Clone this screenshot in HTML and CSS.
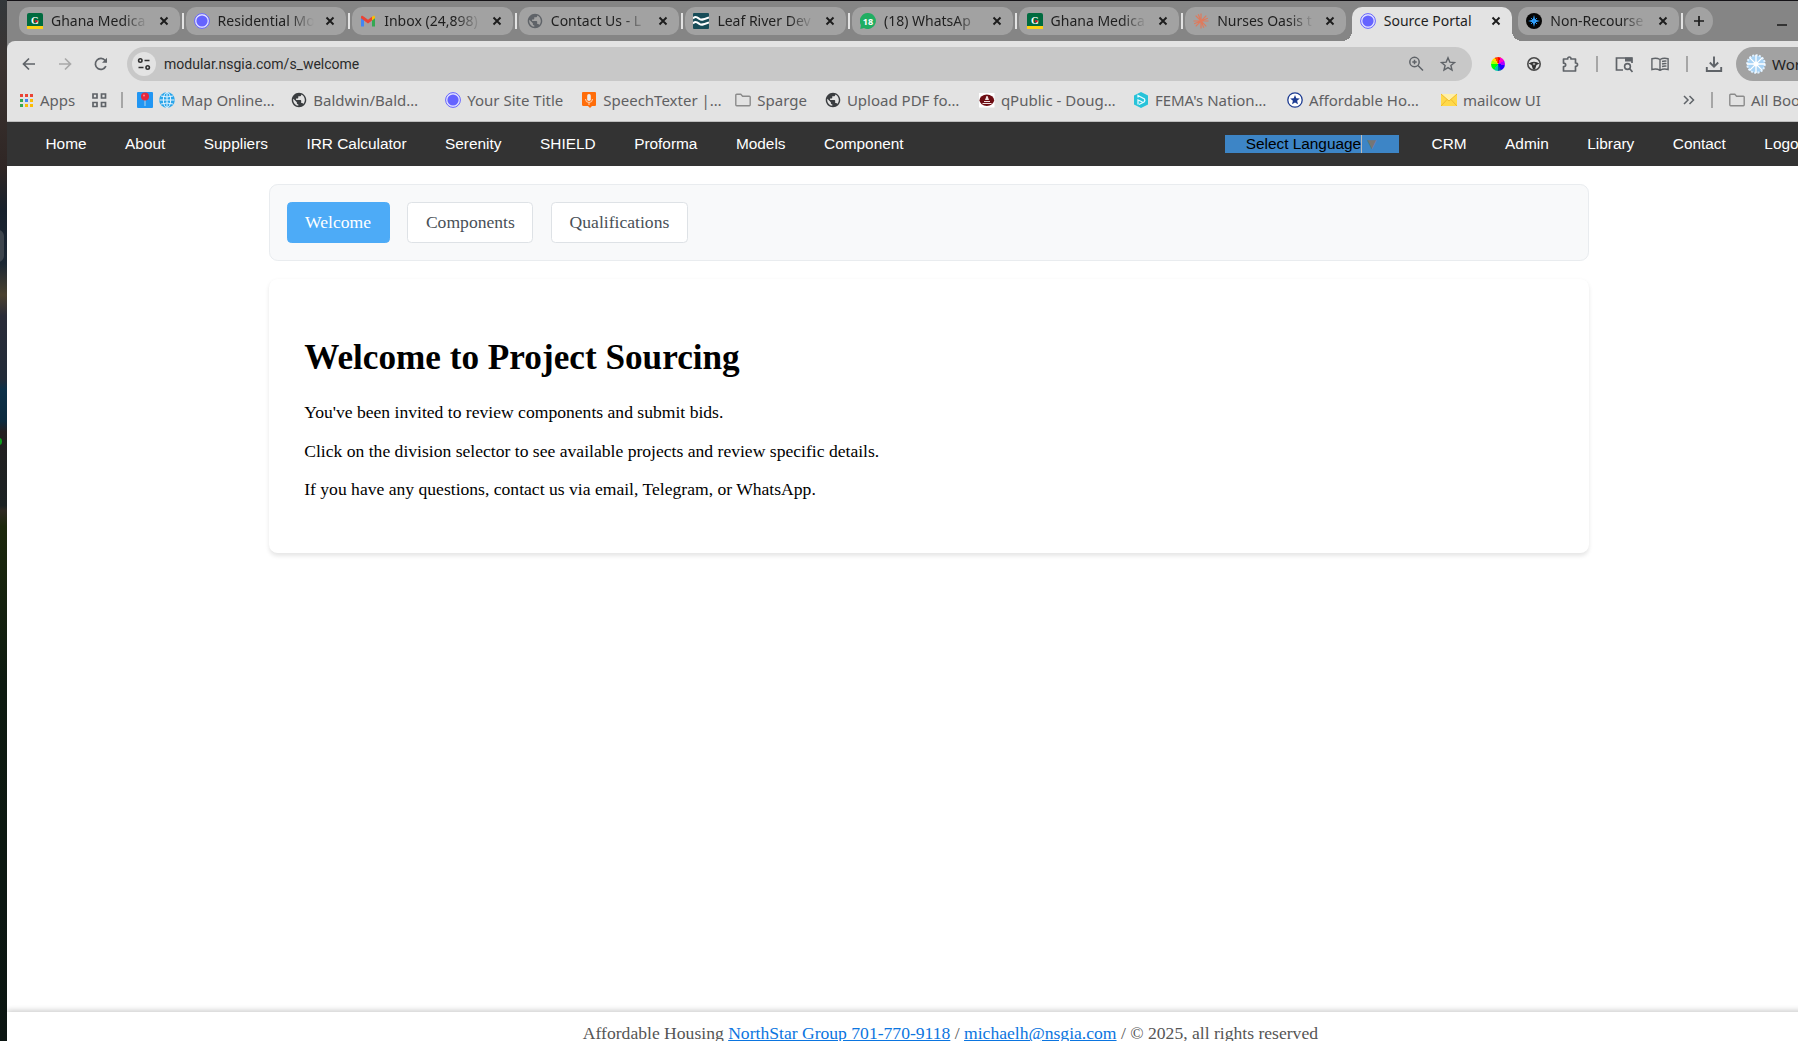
FILE: index.html
```html
<!DOCTYPE html>
<html lang="en">
<head>
<meta charset="utf-8">
<title>Source Portal</title>
<link rel="stylesheet" href="styles.css">
</head>
<body>
<svg class="sprite" aria-hidden="true">
  <symbol id="i-close" viewBox="0 0 16 16"><path d="M4.500 4.500l7 7M11.500 4.500l-7 7" stroke="#1c1c1c" stroke-width="1.900" fill="none"/></symbol>
  <symbol id="i-ghana" viewBox="0 0 16 16"><rect width="16" height="16" rx="2" fill="#006b3f"/><path d="M0 13h16v3H0z" fill="#fcd116"/><text x="8" y="11" text-anchor="middle" class="ghana-letter">G</text><circle cx="9.300" cy="8.300" r="1.300" fill="#ce1126"/></symbol>
  <symbol id="i-disc" viewBox="0 0 16 16"><circle cx="8" cy="8" r="7.400" fill="#e4e4ff" stroke="#6563ff" stroke-width="1"/><circle cx="8" cy="8" r="5.600" fill="#6563ff"/></symbol>
  <symbol id="i-globe" viewBox="1 1 22 22"><path fill="currentColor" d="M12 2C6.480 2 2 6.480 2 12s4.480 10 10 10 10-4.480 10-10S17.520 2 12 2zm-1 17.930c-3.950-.49-7-3.850-7-7.930 0-.62.08-1.210.21-1.790L9 15v1c0 1.100.9 2 2 2v1.930zm6.900-2.540c-.26-.81-1-1.390-1.900-1.390h-1v-3c0-.55-.45-1-1-1H8v-2h2c.55 0 1-.45 1-1V7h2c1.100 0 2-.9 2-2v-.41c2.930 1.190 5 4.060 5 7.410 0 2.080-.8 3.970-2.100 5.390z"/></symbol>
  <symbol id="i-folder" viewBox="0 0 16 16"><path d="M.8 3.200c0-.5.400-.9.900-.9h4.100l1.800 1.900h6.700c.5 0 .9.400.9.900v7.700c0 .5-.4.900-.9.900H1.700c-.5 0-.9-.4-.9-.9z" stroke="#8b8b8b" stroke-width="1.400" fill="none"/></symbol>
</svg>

<div class="desktop">
  <div class="wallpaper"><span class="wallpaper-dock"></span><span class="wallpaper-dot"></span></div>
  <div class="window">
    <header class="strip">
      <div class="tabs">
        <div class="tab sep"><svg class="fav"><use href="#i-ghana"/></svg><button class="tab-title">Ghana Medica</button><button class="tab-close" aria-label="Close tab"><svg><use href="#i-close"/></svg></button></div>
        <div class="tab sep"><svg class="fav"><use href="#i-disc"/></svg><button class="tab-title">Residential Mo</button><button class="tab-close" aria-label="Close tab"><svg><use href="#i-close"/></svg></button></div>
        <div class="tab sep"><svg class="fav" viewBox="0 0 16 16"><path d="M1 4v9.500h3V7z" fill="#4285f4"/><path d="M15 4v9.500h-3V7z" fill="#34a853"/><path d="M12 3.800l1.200-.9C14 2.400 15 3 15 4v1.200l-3 2.300z" fill="#fbbc04"/><path d="M4 3.800L2.800 2.900C2 2.400 1 3 1 4v1.200L4 7.500l4 3 4-3V3.800l-4 3z" fill="#ea4335"/></svg><button class="tab-title">Inbox (24,898)</button><button class="tab-close" aria-label="Close tab"><svg><use href="#i-close"/></svg></button></div>
        <div class="tab sep"><svg class="fav globe-soft"><use href="#i-globe"/></svg><button class="tab-title">Contact Us - L</button><button class="tab-close" aria-label="Close tab"><svg><use href="#i-close"/></svg></button></div>
        <div class="tab sep"><svg class="fav" viewBox="0 0 16 16"><rect width="16" height="16" rx="1" fill="#174c58"/><path d="M0 5.500C2.500 2.500 4.500 4.500 6.500 6S11 6.500 16 4.500M0 10.500C2.500 7.500 4.500 9.500 6.500 11S11 11.500 16 9.500" stroke="#fff" stroke-width="2" fill="none"/></svg><button class="tab-title">Leaf River Dev</button><button class="tab-close" aria-label="Close tab"><svg><use href="#i-close"/></svg></button></div>
        <div class="tab sep"><svg class="fav" viewBox="0 0 16 16"><path d="M8 0a8 8 0 1 1-4 15L.3 16 .9 12A8 8 0 0 1 8 0z" fill="#1fae62"/><text x="8" y="11.500" text-anchor="middle" class="badge-text">18</text></svg><button class="tab-title">(18) WhatsAp</button><button class="tab-close" aria-label="Close tab"><svg><use href="#i-close"/></svg></button></div>
        <div class="tab sep"><svg class="fav"><use href="#i-ghana"/></svg><button class="tab-title">Ghana Medica</button><button class="tab-close" aria-label="Close tab"><svg><use href="#i-close"/></svg></button></div>
        <div class="tab"><svg class="fav" viewBox="0 0 16 16"><path d="M8 .5v15M.5 8h15M2.700 2.700l10.600 10.600M13.300 2.700L2.700 13.300M5.200 1.200l5.600 13.600M14.800 5.200L1.200 10.800" stroke="#e07a5c" stroke-width="1.200"/></svg><button class="tab-title">Nurses Oasis t</button><button class="tab-close" aria-label="Close tab"><svg><use href="#i-close"/></svg></button></div>
        <div class="tab tab-active"><svg class="fav"><use href="#i-disc"/></svg><button class="tab-title">Source Portal</button><button class="tab-close" aria-label="Close tab"><svg><use href="#i-close"/></svg></button></div>
        <div class="tab sep"><svg class="fav" viewBox="0 0 16 16"><circle cx="8" cy="8" r="8" fill="#050505"/><path d="M8 2l1.200 4.800L14 8 9.200 9.200 8 14 6.800 9.200 2 8l4.800-1.200z" fill="#35a4ff"/><path d="M5 5l6 6M11 5l-6 6" stroke="#2490ee" stroke-width="1"/></svg><button class="tab-title">Non-Recourse</button><button class="tab-close" aria-label="Close tab"><svg><use href="#i-close"/></svg></button></div>
      </div>
      <button class="new-tab" aria-label="New tab"><svg viewBox="0 0 16 16"><path d="M8 3v10M3 8h10" stroke="#1c1c1c" stroke-width="1.700"/></svg></button>
      <button class="minimize" aria-label="Minimize"></button>
    </header>

    <div class="toolbar">
      <div class="address-row">
        <div class="history">
          <button class="icon-btn" aria-label="Back"><svg viewBox="0 0 16 16"><path d="M14 8H3M8 2.500L2.500 8 8 13.500" stroke="#5f6368" stroke-width="1.700" fill="none"/></svg></button>
          <button class="icon-btn" aria-label="Forward"><svg viewBox="0 0 16 16"><path d="M2 8h11M8 2.500L13.500 8 8 13.500" stroke="#a9a9a9" stroke-width="1.700" fill="none"/></svg></button>
          <button class="icon-btn" aria-label="Reload"><svg viewBox="0 0 16 16"><path d="M12.900 10.200A5.500 5.500 0 1 1 12.200 4.500L13.500 6" stroke="#5f6368" stroke-width="1.700" fill="none"/><path d="M14 1.800v5H9z" fill="#5f6368"/></svg></button>
        </div>
        <div class="omnibox">
          <button class="site-info" aria-label="Site information"><svg viewBox="0 0 16 16"><g stroke="#303030" stroke-width="1.600" fill="none"><circle cx="4.300" cy="4.500" r="1.700"/><path d="M8.500 4.500h5M2.500 11.500h5"/><circle cx="11.700" cy="11.500" r="1.700"/></g></svg></button>
          <input class="url" type="text" aria-label="Address" value="modular.nsgia.com/s_welcome">
          <button class="icon-btn" aria-label="Zoom"><svg viewBox="0 0 16 16"><g stroke="#5f6368" stroke-width="1.500" fill="none"><circle cx="6.500" cy="6" r="4.700"/><path d="M10 9.500l5 5M6.500 3.800v4.400M4.300 6h4.400"/></g></svg></button>
          <button class="icon-btn" aria-label="Bookmark this page"><svg viewBox="0 0 16 16"><path d="M8 1.800l1.800 4.300 4.700.4-3.600 3 1.100 4.600L8 11.600l-4 2.500 1.100-4.600-3.600-3 4.700-.4z" stroke="#5f6368" stroke-width="1.400" fill="none"/></svg></button>
        </div>
        <div class="extensions">
          <button class="icon-btn" aria-label="Color picker"><span class="wheel"></span></button>
          <button class="icon-btn" aria-label="Steering"><svg viewBox="0 0 16 16"><circle cx="8" cy="8" r="6.200" fill="#e3e3e3" stroke="#4a4a4a" stroke-width="1.600"/><path d="M2.500 7.500q5.500-3.500 11 0l-3 1.500L9 13.500H7L5.500 9z" fill="#333"/><circle cx="8" cy="8" r="1.300" fill="#999"/></svg></button>
          <button class="icon-btn" aria-label="Extensions"><svg class="glyph-18" viewBox="0 0 18 18"><path d="M2.500 4h4.200c-.3-2.700 3.600-2.700 3.300 0h4.500v4c2.700-.3 2.700 3.700 0 3.400V16h-12v-4.300c2.900.2 2.900-3.700 0-3.500z" stroke="#5f6368" stroke-width="1.700" fill="none" stroke-linejoin="round"/></svg></button>
        </div>
        <span class="divider"></span>
        <div class="panel-tools">
          <button class="icon-btn" aria-label="Search this page"><svg class="glyph-18" viewBox="0 0 18 18"><path d="M8 15H1.500V3H17v5" stroke="#5f6368" stroke-width="1.700" fill="none"/><path d="M10 2.500h7v4h-7z" fill="#5f6368"/><circle cx="12.500" cy="11.500" r="2.900" stroke="#5f6368" stroke-width="1.600" fill="none"/><path d="M14.500 13.500L17.500 17" stroke="#5f6368" stroke-width="1.700"/></svg></button>
          <button class="icon-btn" aria-label="Reading mode"><svg class="glyph-18" viewBox="0 0 18 18"><path d="M9 4.500C6.500 3 3.500 3 .9 3.700V14.500c2.600-.7 5.600-.7 8.100.8 2.500-1.500 5.500-1.500 8.100-.8V3.700C14.500 3 11.500 3 9 4.500zV15M11 6.500q2-.7 4.500-.4M11 9q2-.7 4.500-.4M11 11.500q2-.7 4.500-.4" stroke="#5f6368" stroke-width="1.400" fill="none"/></svg></button>
        </div>
        <span class="divider"></span>
        <button class="icon-btn" aria-label="Downloads"><svg class="glyph-18" viewBox="0 0 18 18"><path d="M9 1.500v10M4.800 7.500L9 11.700l4.200-4.200M1.800 12v4h14.400v-4" stroke="#5f6368" stroke-width="1.900" fill="none"/></svg></button>
        <button class="profile"><svg viewBox="0 0 20 20"><circle cx="10" cy="10" r="8.800" fill="#a9d3f5" stroke="#dff0ff" stroke-width="2" stroke-dasharray="2 1.400"/><path d="M10 1v18M1 10h18M3.600 3.600l12.800 12.800M16.400 3.600L3.600 16.400" stroke="#fff" stroke-width="1.300"/><circle cx="10" cy="10" r="2.500" fill="#fff"/></svg><span>Work</span></button>
      </div>

      <nav class="bookmarks" aria-label="Bookmarks">
        <a class="bookmark" href="#"><svg viewBox="0 0 16 16"><path d="M2 2h3v3H2zM7 2h3v3H7zM12 2h3v3h-3z" fill="#ea4335"/><path d="M2 7h3v3H2zM2 12h3v3H2z" fill="#34a853"/><path d="M7 7h3v3H7z" fill="#4285f4"/><path d="M12 7h3v3h-3zM7 12h3v3H7zM12 12h3v3h-3z" fill="#fbbc04"/></svg>Apps</a>
        <button class="tab-groups" aria-label="Tab groups"><svg viewBox="0 0 16 16"><path d="M2 2h4v4H2zM10.500 2h4v4h-4zM2 10.500h4v4H2zM10.500 10.500h4v4h-4z" stroke="#5f6368" stroke-width="1.700" fill="none"/></svg></button>
        <span class="divider"></span>
        <div class="saved">
          <a class="bookmark bookmark-long" href="#"><svg viewBox="0 0 16 16"><rect width="16" height="16" rx="1" fill="#2196f3"/><path d="M7.500 6h1v8h-1z" fill="#b5d4ea"/><circle cx="8" cy="4.500" r="4" fill="#e6263c"/><circle cx="7" cy="3.500" r="1" fill="#ff8791"/></svg><svg viewBox="0 0 16 16"><circle cx="8" cy="8" r="7.800" fill="#2aa5ea"/><g stroke="#e6f5ff" fill="none"><path d="M8 .5v15M.5 8h15M2 4q6 2 12 0M2 12q6-2 12 0"/><ellipse cx="8" cy="8" rx="3.700" ry="7.500"/></g></svg><span>Map Online…</span></a>
          <a class="bookmark bookmark-long" href="#"><svg class="globe-dark"><use href="#i-globe"/></svg><span>Baldwin/Bald…</span></a>
          <a class="bookmark" href="#"><svg><use href="#i-disc"/></svg><span>Your Site Title</span></a>
          <a class="bookmark bookmark-long" href="#"><svg viewBox="0 0 16 16"><path d="M2 0h12q1 0 1 1v12q0 1-1 1h-3l-2 2-2-2H2q-1-.5-1-1V1q0-1 1-1z" fill="#ff6d0a"/><rect x="6.200" y="2" width="3.600" height="7" rx="1.800" fill="#eee"/><path d="M4.500 7q0 3.500 3.500 3.500T11.500 7M8 10.500V13" stroke="#ffd4b5" fill="none"/></svg><span>SpeechTexter |…</span></a>
          <a class="bookmark" href="#"><svg><use href="#i-folder"/></svg><span>Sparge</span></a>
          <a class="bookmark bookmark-long" href="#"><svg class="globe-dark"><use href="#i-globe"/></svg><span>Upload PDF fo…</span></a>
          <a class="bookmark bookmark-long" href="#"><svg viewBox="0 0 16 16"><path d="M0 1h15.500v14.500H0z" fill="#fff"/><ellipse cx="7.800" cy="8.200" rx="7.300" ry="5.700" fill="#6d0c12"/><path d="M7.500 4h1l1.500 4H6zM5 9h6v1H5zM3.500 11h9v1h-9z" fill="#f0e0e0"/></svg><span>qPublic - Doug…</span></a>
          <a class="bookmark bookmark-long" href="#"><svg viewBox="0 0 16 16"><path d="M8 0l7 3.500v9L8 16l-7-3.500v-9z" fill="#27c3d9"/><path d="M5 12.500V8l4.500 2M5 5.500V3.500l6.500 3.500q1 1.500-.5 3L6 12.500" stroke="#e9fbff" stroke-width="1.300" fill="none"/></svg><span>FEMA's Nation…</span></a>
          <a class="bookmark bookmark-long" href="#"><svg viewBox="0 0 16 16"><circle cx="8" cy="8" r="7.200" fill="#fff" stroke="#1d3c92" stroke-width="1.300"/><path d="M8 3l1.300 3.300 3.500.2-2.700 2.300.9 3.500L8 10.400l-3 1.900.9-3.500-2.700-2.300 3.500-.2z" fill="#1d3c92"/></svg><span>Affordable Ho…</span></a>
          <a class="bookmark" href="#"><svg viewBox="0 0 16 16"><path d="M0 2h16v12H0z" fill="#ffd94a"/><path d="M0 2h16L8 9z" fill="#fff0a8"/><path d="M0 2l8 7 8-7M0 14l6-6.500M16 14l-6-6.500" stroke="#efba2e" fill="none"/></svg><span>mailcow UI</span></a>
        </div>
        <button class="more" aria-label="More bookmarks"><svg viewBox="0 0 16 16"><path d="M3 4l4 4-4 4M8.500 4l4 4-4 4" stroke="#5f6368" stroke-width="1.500" fill="none"/></svg></button>
        <span class="divider"></span>
        <a class="bookmark all-bookmarks" href="#"><svg><use href="#i-folder"/></svg><span>All Bookmarks</span></a>
      </nav>
    </div>

    <div class="site">
      <nav class="site-nav" aria-label="Main">
        <div class="nav-group">
          <a href="#">Home</a><a href="#">About</a><a href="#">Suppliers</a><a href="#">IRR Calculator</a><a href="#">Serenity</a><a href="#">SHIELD</a><a href="#">Proforma</a><a href="#">Models</a><a href="#">Component</a>
        </div>
        <div class="nav-group">
          <button class="language"><span class="language-name">Select Language</span><span class="language-arrow">▼</span></button>
          <a href="#">CRM</a><a href="#">Admin</a><a href="#">Library</a><a href="#">Contact</a><a href="#">Logout</a>
        </div>
      </nav>
      <main class="content">
        <div class="sections">
          <button class="section section-active">Welcome</button>
          <button class="section">Components</button>
          <button class="section">Qualifications</button>
        </div>
        <article class="card">
          <h1>Welcome to Project Sourcing</h1>
          <p>You've been invited to review components and submit bids.</p>
          <p>Click on the division selector to see available projects and review specific details.</p>
          <p>If you have any questions, contact us via email, Telegram, or WhatsApp.</p>
        </article>
      </main>
      <footer class="footer">Affordable Housing <a href="#">NorthStar Group 701-770-9118</a> / <a href="#">michaelh@nsgia.com</a> / © 2025, all rights reserved</footer>
    </div>
  </div>
</div>
</body>
</html>
```
FILE: styles.css
```css
* { box-sizing: border-box; }
body { margin: 0; background: #fff; }
button, input { margin: 0; padding: 0; border: 0; background: none; font: inherit; color: inherit; }
a { color: inherit; text-decoration: none; }
svg { display: block; flex: none; }
.sprite { display: none; }

/* The window runs past the right and bottom edges of the screen. */
.desktop {
  display: grid;
  grid-template-columns: 7px calc(100% + 46px);
  height: 100vh;
  overflow: hidden;
}
.wallpaper {
  position: relative;
  overflow: hidden;
  background: linear-gradient(#33383b 0, #3b3431 6%, #2f2624 16%, #17202c 20%, #1c2733 25%, #4a412f 28%, #2a2c38 30%, #222b38 36%, #0c3048 37%, #0c2a3e 40%, #231f20 41%, #1b2223 48%, #2e2a22 48.5%, #1c280c 50%, #0d1a10 65%, #0b1512 100%);
}
.wallpaper-dock { position: absolute; left: -8px; top: 230px; width: 12px; height: 32px; border-radius: 6px; background: #3e454d; }
.wallpaper-dot { position: absolute; left: -4px; top: 438px; width: 6px; height: 7px; border-radius: 3px; background: #0d9c1c; }

.window {
  display: flex;
  flex-direction: column;
  height: calc(100vh + 12px);
  font-family: "Noto Sans", "Open Sans", sans-serif;
  font-size: 15px;
  background: #858585;
}

/* Tab strip */
.strip {
  display: flex;
  gap: 6px;
  height: 41px;
  flex: none;
  padding: 6px 12px 0;
  border-top: 1px solid #141216;
  font-size: 14px;
}
.tabs { display: flex; gap: 6px; flex: 0 1 1660px; min-width: 0; }
.tab {
  position: relative;
  display: flex;
  align-items: center;
  gap: 8px;
  flex: 1 1 0;
  min-width: 0;
  height: 28px;
  padding: 0 8px;
  border-radius: 10px;
  background: #a2a2a2;
  color: #1f1f1f;
}
.fav { width: 16px; height: 16px; }
.tab-title {
  flex: 1;
  min-width: 0;
  white-space: nowrap;
  text-align: left;
  line-height: 20px;
  -webkit-mask-image: linear-gradient(to right, #000 74%, transparent);
  mask-image: linear-gradient(to right, #000 74%, transparent);
}
.tab-close svg { width: 16px; height: 16px; }
.sep::after { content: ""; position: absolute; right: -4px; top: 6px; width: 2px; height: 16px; background: #e3e3e3; }
.tab-active { height: 34px; padding-bottom: 6px; border-radius: 10px 10px 0 0; background: #e3e3e3; }
.tab-active .tab-title { -webkit-mask-image: none; mask-image: none; }
.tab-active::before, .tab-active::after {
  content: "";
  position: absolute;
  bottom: 0;
  width: 10px;
  height: 10px;
}
.tab-active::before { left: -10px; background: radial-gradient(circle at 0 0, transparent 10px, #e3e3e3 10px); }
.tab-active::after { right: -10px; background: radial-gradient(circle at 100% 0, transparent 10px, #e3e3e3 10px); }
.badge-text { font: bold 9px "Noto Sans", sans-serif; fill: #fff; }
.ghana-letter { font: bold 10px "Liberation Serif", serif; fill: #fff; }
.globe-soft { color: #5f6368; }
.globe-dark { color: #3a3d40; }
.new-tab { display: grid; place-items: center; width: 28px; height: 28px; border-radius: 14px; background: #a2a2a2; }
.new-tab svg { width: 16px; height: 16px; }
.minimize { width: 10px; height: 2px; margin: 17px 52px 0 auto; background: #333; }

/* Toolbar */
.toolbar {
  flex: none;
  height: 81px;
  padding-top: 6px;
  border-bottom: 1px solid #bdbdbd;
  border-radius: 8px 0 0 0;
  background: #e3e3e3;
}
.address-row { display: flex; align-items: center; height: 34px; padding-right: 35px; }
.icon-btn { display: grid; place-items: center; flex: none; width: 32px; height: 28px; }
.icon-btn svg { width: 16px; height: 16px; }
.icon-btn .glyph-18 { width: 18px; height: 18px; }
.history { display: flex; gap: 4px; padding: 0 10px 0 6px; }
.omnibox {
  display: flex;
  align-items: center;
  flex: 1;
  height: 34px;
  padding: 0 8px 0 5px;
  border-radius: 17px;
  background: #c8c8c8;
}
.site-info { display: grid; place-items: center; width: 24px; height: 24px; border-radius: 12px; background: #e3e3e3; }
.site-info svg { width: 16px; height: 16px; }
.url { flex: 1; min-width: 0; height: 24px; margin-left: 8px; color: #2b2b2b; font-family: Roboto, sans-serif; font-size: 14px; outline: 0; }
.extensions, .panel-tools { display: flex; gap: 4px; padding: 0 10px; }
.wheel {
  width: 14px;
  height: 14px;
  border-radius: 7px;
  background: conic-gradient(#f00 0 6%, #f0c 6% 18%, #a0f 18% 28%, #20f 28% 42%, #06a 42% 50%, #0ca 50% 60%, #0f0 60% 74%, #af0 74% 84%, #fd0 84% 92%, #f40 92%);
}
.divider { flex: none; width: 2px; height: 16px; background: #a6a6a6; }
.address-row .divider + .icon-btn { margin: 0 6px 0 10px; }
.profile {
  display: flex;
  align-items: center;
  gap: 6px;
  width: 80px;
  height: 34px;
  padding-left: 10px;
  border-radius: 17px;
  background: #a2a2a2;
  color: #1f1f1f;
}
.profile svg { width: 20px; height: 20px; }

/* Bookmarks bar */
.bookmarks { display: flex; align-items: center; height: 38px; padding-left: 11px; color: #5f6062; }
.bookmark { display: flex; align-items: center; gap: 6px; flex: none; white-space: nowrap; }
.bookmark svg, .tab-groups svg, .more svg { width: 16px; height: 16px; }
.bookmark-long { width: 136px; }
.tab-groups { margin: 0 14px 0 16px; }
.saved { display: flex; gap: 18px; flex: 1; padding-left: 14px; }
.more { margin-right: 14px; }
.all-bookmarks { width: 122px; margin-left: 16px; }

/* Site, shown at the browser's 110% zoom level */
.site {
  display: flex;
  flex-direction: column;
  flex: 1;
  zoom: 1.1;
  background: #fff;
  font-family: "Liberation Serif", "Times New Roman", serif;
  font-size: 16px;
}
.site-nav {
  display: flex;
  align-items: center;
  justify-content: space-between;
  height: 40px;
  padding: 0 36px 0 35px;
  background: #333;
  color: #fff;
  font-family: "Liberation Sans", Arial, sans-serif;
  font-size: 14px;
}
.nav-group { display: flex; align-items: center; gap: 35px; }
.language {
  display: flex;
  align-items: center;
  width: 158px;
  height: 16px;
  margin-right: -5px;
  padding-left: 19px;
  background: #3d85c6;
  color: #000;
  line-height: 16px;
}
.language-name { border-right: 1px solid #bbb; }
.language-arrow { margin-left: 2px; color: #767676; }
.content { flex: 1; width: 1200px; max-width: 100%; margin: 0 auto; padding-top: 16px; }
.sections {
  display: flex;
  gap: 16px;
  padding: 16px 15px;
  border: 1px solid #e9ecef;
  border-radius: 8px;
  background: #f8f9fa;
}
.section { padding: 8px 16px; border: 1px solid #dee2e6; border-radius: 4px; background: #fff; color: #495057; line-height: 19px; }
.section-active { border-color: #4dabf7; background: #4dabf7; color: #fff; }
.card {
  margin-top: 16px;
  padding: 32px;
  border-radius: 8px;
  background: #fff;
  box-shadow: 0 2px 4px rgba(0, 0, 0, 0.1);
}
.card h1 { margin: 22px 0 21px; font-size: 32px; line-height: 37px; }
.card p { margin: 16px 0; line-height: 19px; }
.footer {
  padding: 11px 0 8px 39px;
  background: #fff;
  box-shadow: 0 -2px 5px rgba(0, 0, 0, 0.2);
  color: #555;
  line-height: 18px;
  text-align: center;
}
.footer a { color: #0b75e0; text-decoration: underline; }
```
